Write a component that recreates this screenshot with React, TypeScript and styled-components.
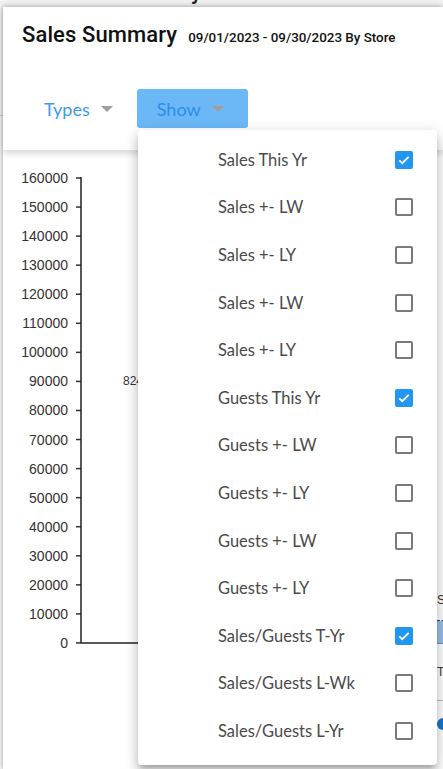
import React from "react";
import styled, { createGlobalStyle } from "styled-components";

const GlobalStyle = createGlobalStyle`
  html, body {
    margin: 0;
    padding: 0;
    background: #ffffff;
  }
  body {
    font-family: "Roboto", "Liberation Sans", sans-serif;
  }
`;

const Page = styled.div`
  position: relative;
  width: 443px;
  height: 769px;
  overflow: hidden;
  background: #f4f4f4;
`;

const BehindTitle = styled.div`
  padding: 0 0 0 48px;
  margin-top: -21px;
  font-size: 22px;
  font-weight: 500;
  color: #222;
`;

const BehindLine = styled.div`
  position: absolute;
  left: 0;
  top: 115px;
  width: 3px;
  height: 1px;
  background: #cfcfcf;
`;

const Sheet = styled.div`
  position: absolute;
  top: 7px;
  left: 3px;
  right: 0;
  bottom: 0;
  background: #fff;
  box-shadow: 0 -2px 6px rgba(0, 0, 0, 0.18), -1px 0 3px rgba(0, 0, 0, 0.12);
  display: flex;
  flex-direction: column;
`;

const Header = styled.div`
  position: relative;
  z-index: 1;
  height: 143px;
  box-sizing: border-box;
  padding: 15px 0 0 19px;
  background: #fff;
  box-shadow: 0 4px 6px rgba(0, 0, 0, 0.14);
`;

const TitleRow = styled.div`
  display: flex;
  align-items: baseline;
  gap: 11px;
`;

const Title = styled.h1`
  margin: 0;
  font-size: 22px;
  font-weight: 500;
  color: #111;
  letter-spacing: 0.1px;
`;

const Subtitle = styled.span`
  font-size: 13.4px;
  font-weight: 500;
  color: #111;
`;

const ButtonRow = styled.div`
  display: flex;
  align-items: center;
  margin-top: 42px;
  margin-left: 2px;
`;

const MenuButton = styled.button<{ active?: boolean }>`
  display: flex;
  align-items: center;
  gap: 11px;
  height: 39px;
  padding: 0 24px 0 20px;
  border: none;
  border-radius: 3px;
  background: ${(p) => (p.active ? "#6cb8f7" : "transparent")};
  color: ${(p) => (p.active ? "#2a8eea" : "#3d9bee")};
  font-family: "Lato", "Open Sans", sans-serif;
  font-size: 18px;
  cursor: pointer;
`;

const Caret = styled.span`
  width: 0;
  height: 0;
  border-left: 6px solid transparent;
  border-right: 6px solid transparent;
  border-top: 6px solid #9e9e9e;
  margin-top: 1px;
`;

const Body = styled.div`
  display: flex;
  flex: 1;
`;

const ChartBox = styled.div`
  width: 434px;
  flex: none;
`;

const SideTable = styled.div`
  display: flex;
  flex-direction: column;
  padding-top: 430px;
  font-family: "Liberation Sans", sans-serif;
  font-size: 12px;
  color: #333;
`;

const TableCell = styled.div<{ h: number; line?: string }>`
  height: ${(p) => p.h}px;
  display: flex;
  align-items: center;
  white-space: nowrap;
  border-bottom: ${(p) => p.line || "none"};
`;

const HeadBar = styled.div`
  height: 22px;
  background: #9bbde8;
  border-bottom: 1px solid #6f8fbf;
`;

const Pill = styled.div`
  margin-top: 17px;
  height: 12px;
  border-radius: 6px 0 0 6px;
  background: #1976d2;
`;

const Dropdown = styled.div`
  position: absolute;
  z-index: 5;
  left: 138px;
  top: 130px;
  width: 299px;
  height: 635px;
  box-sizing: border-box;
  padding-top: 6px;
  background: #fff;
  border-radius: 4px;
  box-shadow: 0 5px 5px -3px rgba(0, 0, 0, 0.2), 0 8px 10px 1px rgba(0, 0, 0, 0.14),
    0 3px 14px 2px rgba(0, 0, 0, 0.12);
`;

const Option = styled.label`
  display: flex;
  align-items: center;
  justify-content: space-between;
  height: 47.6px;
  padding: 0 24px 0 80px;
  font-family: "Lato", "Open Sans", sans-serif;
  font-size: 16.5px;
  color: #4a4a4a;
  cursor: pointer;
`;

const Box = styled.span<{ checked: boolean }>`
  width: 18px;
  height: 18px;
  box-sizing: border-box;
  border-radius: 2px;
  border: 2px solid ${(p) => (p.checked ? "#2196f3" : "#7a7a7a")};
  background: ${(p) => (p.checked ? "#2196f3" : "#fff")};
  display: grid;
  place-items: center;
`;

const options = [
  { label: "Sales This Yr", checked: true },
  { label: "Sales +- LW", checked: false },
  { label: "Sales +- LY", checked: false },
  { label: "Sales +- LW", checked: false },
  { label: "Sales +- LY", checked: false },
  { label: "Guests This Yr", checked: true },
  { label: "Guests +- LW", checked: false },
  { label: "Guests +- LY", checked: false },
  { label: "Guests +- LW", checked: false },
  { label: "Guests +- LY", checked: false },
  { label: "Sales/Guests T-Yr", checked: true },
  { label: "Sales/Guests L-Wk", checked: false },
  { label: "Sales/Guests L-Yr", checked: false },
];

const ticks = Array.from({ length: 17 }, (_, i) => 160000 - i * 10000);

const Chart = () => (
  <svg width="434" height="612" viewBox="0 0 434 612">
    {ticks.map((t, i) => {
      const y = 28 + i * 29.06;
      return (
        <g key={t}>
          <text
            x="65"
            y={y + 5}
            textAnchor="end"
            fontFamily="Liberation Sans, Arial, sans-serif"
            fontSize="14"
            fill="#333"
          >
            {t}
          </text>
          <line x1="73" x2="78" y1={y} y2={y} stroke="#333" strokeWidth="1.5" />
        </g>
      );
    })}
    <line x1="78" x2="78" y1="27" y2="493" stroke="#222" strokeWidth="1.5" />
    <line x1="78" x2="434" y1="493" y2="493" stroke="#222" strokeWidth="1.5" />
    <text x="120" y="235" fontFamily="Liberation Sans, Arial, sans-serif" fontSize="12" fill="#333">
      82461
    </text>
  </svg>
);

const Check = () => (
  <svg width="14" height="14" viewBox="0 0 24 24">
    <path d="M4 12.5l5 5L20 6.5" fill="none" stroke="#fff" strokeWidth="3" />
  </svg>
);

export default function App() {
  return (
    <Page>
      <GlobalStyle />
      <BehindTitle>Sales Summary</BehindTitle>
      <BehindLine />
      <Sheet>
        <Header>
          <TitleRow>
            <Title>Sales Summary</Title>
            <Subtitle>09/01/2023 - 09/30/2023 By Store</Subtitle>
          </TitleRow>
          <ButtonRow>
            <MenuButton>
              Types <Caret />
            </MenuButton>
            <MenuButton active>
              Show <Caret />
            </MenuButton>
          </ButtonRow>
        </Header>
        <Body>
          <ChartBox>
            <Chart />
          </ChartBox>
          <SideTable>
            <TableCell h={40} line="1px dashed #444">Sa</TableCell>
            <HeadBar />
            <TableCell h={56} line="1px solid #bbb">Tot</TableCell>
            <Pill />
          </SideTable>
        </Body>
      </Sheet>
      <Dropdown>
        {options.map((o, i) => (
          <Option key={i}>
            <span>{o.label}</span>
            <Box checked={o.checked}>{o.checked && <Check />}</Box>
          </Option>
        ))}
      </Dropdown>
    </Page>
  );
}
